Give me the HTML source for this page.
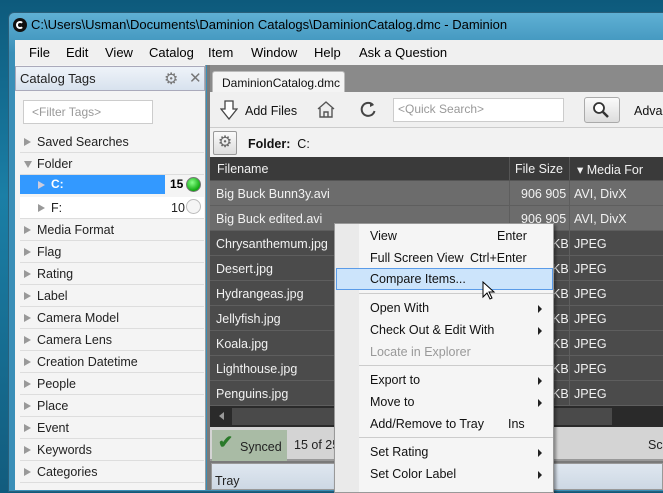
<!DOCTYPE html>
<html><head><style>
*{margin:0;padding:0;box-sizing:border-box}
body{width:663px;height:490px;overflow:hidden;font-family:"Liberation Sans",sans-serif;font-size:12px;position:relative;background:linear-gradient(180deg,#0d5a7c 0%,#1b7fa6 40%,#125c7e 100%)}
.a{position:absolute}
.win{left:8px;top:12px;width:660px;height:480px;background:linear-gradient(180deg,#5fb0d4,#3a8fb8 40px);border-radius:6px 0 0 0;border:1px solid #2a5f7a}
.menu{left:15px;top:40px;width:648px;height:25px;background:#f0f0f0;font-size:13px}
.menu span{position:absolute;top:5px}
.lp{left:15px;top:65px;width:191px;height:425px;background:#f4f4f4;border-right:1px solid #999}
.row{position:absolute;left:20px;width:184px;height:22px;border-bottom:1px solid #ddd;font-size:12.5px;color:#222}
.row .t{position:absolute;left:17px;top:4px}
.row .tri{position:absolute;left:4px;top:7px;width:0;height:0;border-left:7px solid #999;border-top:4px solid transparent;border-bottom:4px solid transparent}
.tr{position:absolute;left:210px;width:453px;height:25px;border-bottom:1px solid #5e5e5e;color:#f2f2f2;font-size:12.5px;background:#4b4b4b}
.tr span{position:absolute;top:6px;white-space:nowrap}
.tr .c1{left:6px}.tr .c2{left:311px}.tr .c3{left:364px}
.tr .kb{left:342px}
.cm{left:334px;top:223px;width:220px;height:270px;background:#f5f5f5;border:1px solid #999;box-shadow:2px 2px 3px rgba(0,0,0,.4)}
.mi{position:absolute;left:35px;font-size:12.5px;color:#111}
.sc{position:absolute;font-size:12.5px;color:#111}
.ar{position:absolute;left:203px;width:0;height:0;border-left:4px solid #222;border-top:4px solid transparent;border-bottom:4px solid transparent}
.sep{position:absolute;left:24px;width:194px;height:1px;background:#ccc}
</style></head><body>
<div class="a win"></div>
<div class="a" style="left:13px;top:18px;width:14px;height:14px;border-radius:50%;background:#111;"><div class="a" style="left:3px;top:3px;width:8px;height:8px;border-radius:50%;border:2px solid #fff;border-right-color:#111"></div></div>
<div class="a" style="left:31px;top:17px;font-size:13px;color:#000">C:\Users\Usman\Documents\Daminion Catalogs\DaminionCatalog.dmc - Daminion</div>
<div class="a menu"><span style="left:14px">File</span><span style="left:51px">Edit</span><span style="left:90px">View</span><span style="left:134px">Catalog</span><span style="left:193px">Item</span><span style="left:236px">Window</span><span style="left:299px">Help</span><span style="left:344px">Ask a Question</span></div>
<div class="a lp"></div>
<div class="a" style="left:15px;top:66px;width:190px;height:25px;background:linear-gradient(#eef3f9,#d8e2ee);border:1px solid #aab;"></div>
<div class="a" style="left:20px;top:71px;font-size:13px;color:#222">Catalog Tags</div>
<div class="a" style="left:164px;top:69px;font-size:16px;color:#777">⚙</div>
<div class="a" style="left:189px;top:69px;font-size:15px;color:#777">✕</div>
<div class="a" style="left:23px;top:100px;width:130px;height:24px;background:#fff;border:1px solid #ccc;color:#999;padding:4px 8px;font-size:12px">&lt;Filter Tags&gt;</div>
<div class="row" style="top:131px"><i class="tri"></i><span class="t">Saved Searches</span></div>
<div class="row" style="top:153px"><i class="tri" style="border:none;border-top:7px solid #999;border-left:4px solid transparent;border-right:4px solid transparent;top:8px"></i><span class="t">Folder</span></div>
<div class="a" style="left:20px;top:175px;width:145px;height:19px;background:#3399ff"></div>
<div class="a" style="left:38px;top:181px;border-left:7px solid #ccd;border-top:4px solid transparent;border-bottom:4px solid transparent"></div>
<div class="a" style="left:51px;top:177px;color:#fff;font-weight:bold">C:</div>
<div class="a" style="left:170px;top:177px;font-weight:bold">15</div>
<div class="a" style="left:186px;top:177px;width:15px;height:15px;border-radius:50%;background:radial-gradient(circle at 40% 35%,#8f8,#1a1 70%);border:1px solid #777"></div>
<div class="row" style="top:197px;background:#fff"><i class="tri" style="left:18px"></i><span class="t" style="left:31px">F:</span><span class="a" style="left:151px;top:4px">10</span><span class="a" style="left:166px;top:2px;width:15px;height:15px;border-radius:50%;border:1px solid #bbb;background:#f5f5f5"></span></div>
<div class="row" style="top:219px"><i class="tri"></i><span class="t">Media Format</span></div>
<div class="row" style="top:241px"><i class="tri"></i><span class="t">Flag</span></div>
<div class="row" style="top:263px"><i class="tri"></i><span class="t">Rating</span></div>
<div class="row" style="top:285px"><i class="tri"></i><span class="t">Label</span></div>
<div class="row" style="top:307px"><i class="tri"></i><span class="t">Camera Model</span></div>
<div class="row" style="top:329px"><i class="tri"></i><span class="t">Camera Lens</span></div>
<div class="row" style="top:351px"><i class="tri"></i><span class="t">Creation Datetime</span></div>
<div class="row" style="top:373px"><i class="tri"></i><span class="t">People</span></div>
<div class="row" style="top:395px"><i class="tri"></i><span class="t">Place</span></div>
<div class="row" style="top:417px"><i class="tri"></i><span class="t">Event</span></div>
<div class="row" style="top:439px"><i class="tri"></i><span class="t">Keywords</span></div>
<div class="row" style="top:461px"><i class="tri"></i><span class="t">Categories</span></div>

<div class="a" style="left:207px;top:65px;width:456px;height:425px;background:#7a7a7a"></div>
<div class="a" style="left:210px;top:65px;width:453px;height:27px;background:#8a8a8a"></div>
<div class="a" style="left:212px;top:71px;width:133px;height:22px;background:#f4f4f4;border:1px solid #bbb;border-bottom:none;border-radius:3px 3px 0 0;padding:4px 0 0 9px;font-size:12px;color:#111;white-space:nowrap">DaminionCatalog.dmc</div>
<div class="a" style="left:210px;top:92px;width:453px;height:35px;background:#f0f0f0"></div>
<svg class="a" style="left:220px;top:100px" width="18" height="20" viewBox="0 0 18 20"><path d="M5 1h8v8h4l-8 10-8-10h4z" fill="#fff" stroke="#444" stroke-width="1.3"/></svg>
<div class="a" style="left:245px;top:104px;font-size:12.5px;color:#111">Add Files</div>
<svg class="a" style="left:316px;top:100px" width="20" height="18" viewBox="0 0 20 18"><path d="M2 9L10 2l8 7M4 8v9h12V8M8 17v-5h4v5" fill="#eee" stroke="#555" stroke-width="1.4"/></svg>
<svg class="a" style="left:359px;top:100px" width="18" height="18" viewBox="0 0 18 18"><path d="M14 5A6.5 6.5 0 1 0 15.5 11" fill="none" stroke="#444" stroke-width="2"/><path d="M11 2l4 3-4 2z" fill="#444"/></svg>
<div class="a" style="left:393px;top:98px;width:171px;height:24px;background:#fff;border:1px solid #ccc;color:#999;padding:3px 4px;font-size:12px">&lt;Quick Search&gt;</div>
<div class="a" style="left:584px;top:97px;width:36px;height:26px;border:1px solid #aaa;border-radius:3px;background:linear-gradient(#fafafa,#ddd)"></div>
<svg class="a" style="left:592px;top:101px" width="18" height="18" viewBox="0 0 18 18"><circle cx="7" cy="7" r="5" fill="#fff" stroke="#333" stroke-width="1.8"/><path d="M11 11l5 5" stroke="#333" stroke-width="2.5"/></svg>
<div class="a" style="left:634px;top:104px;font-size:12.5px;color:#111">Adva</div>
<div class="a" style="left:210px;top:127px;width:453px;height:30px;background:#f2f2f2;border-top:1px solid #ccc"></div>
<div class="a" style="left:213px;top:131px;width:24px;height:24px;border:1px solid #999;border-radius:2px;background:linear-gradient(#fafafa,#ddd);font-size:16px;color:#666;text-align:center;line-height:22px">⚙</div>
<div class="a" style="left:248px;top:137px;font-size:12.5px;color:#111"><b>Folder:</b>&nbsp; C:</div>
<div class="a" style="left:210px;top:157px;width:453px;height:25px;background:#3a3a3a;border-bottom:2px solid #555"></div>
<div class="a" style="left:217px;top:162px;color:#f2f2f2;font-size:12.5px">Filename</div>
<div class="a" style="left:509px;top:157px;width:1px;height:24px;background:#555"></div>
<div class="a" style="left:515px;top:162px;color:#f2f2f2;font-size:12.5px">File Size</div>
<div class="a" style="left:569px;top:157px;width:1px;height:24px;background:#555"></div>
<div class="a" style="left:577px;top:162px;color:#f2f2f2;font-size:12.5px">▾ Media For</div>
<div class="tr" style="top:181px;background:#6c6c6c"><span class="c1">Big Buck Bunn3y.avi</span><span class="c2">906 905</span><span class="c3">AVI, DivX</span></div>
<div class="tr" style="top:206px;background:#6c6c6c"><span class="c1">Big Buck edited.avi</span><span class="c2">906 905</span><span class="c3">AVI, DivX</span></div>
<div class="tr" style="top:231px"><span class="c1">Chrysanthemum.jpg</span><span class="kb">KB</span><span class="c3">JPEG</span></div>
<div class="tr" style="top:256px"><span class="c1">Desert.jpg</span><span class="kb">KB</span><span class="c3">JPEG</span></div>
<div class="tr" style="top:281px"><span class="c1">Hydrangeas.jpg</span><span class="kb">KB</span><span class="c3">JPEG</span></div>
<div class="tr" style="top:306px"><span class="c1">Jellyfish.jpg</span><span class="kb">KB</span><span class="c3">JPEG</span></div>
<div class="tr" style="top:331px"><span class="c1">Koala.jpg</span><span class="kb">KB</span><span class="c3">JPEG</span></div>
<div class="tr" style="top:356px"><span class="c1">Lighthouse.jpg</span><span class="kb">KB</span><span class="c3">JPEG</span></div>
<div class="tr" style="top:381px"><span class="c1">Penguins.jpg</span><span class="kb">KB</span><span class="c3">JPEG</span></div>
<div class="a" style="left:509px;top:181px;width:1px;height:225px;background:#5e5e5e"></div>
<div class="a" style="left:569px;top:181px;width:1px;height:225px;background:#5e5e5e"></div>
<div class="a" style="left:210px;top:406px;width:453px;height:21px;background:#2a2a2a"></div>
<div class="a" style="left:232px;top:408px;width:380px;height:17px;background:#4a4a4a"></div>
<div class="a" style="left:219px;top:412px;border-right:5px solid #999;border-top:4px solid transparent;border-bottom:4px solid transparent"></div>
<div class="a" style="left:210px;top:427px;width:453px;height:34px;background:#d4d4d4;border-bottom:2px solid #999"></div>
<div class="a" style="left:212px;top:430px;width:75px;height:31px;background:#a9bba5"></div>
<div class="a" style="left:218px;top:432px;color:#2a7a2a;font-size:18px;font-weight:bold">✔</div>
<div class="a" style="left:240px;top:440px;font-size:12.5px;color:#222">Synced</div>
<div class="a" style="left:294px;top:438px;font-size:12.5px;color:#222">15 of 25</div>
<div class="a" style="left:648px;top:438px;font-size:12.5px;color:#222">Sc</div>
<div class="a" style="left:211px;top:463px;width:452px;height:27px;background:linear-gradient(#dfe7f0,#cdd8e4);border:1px solid #999"></div>
<div class="a" style="left:215px;top:474px;font-size:12.5px;color:#222">Tray</div>

<div class="a cm">
<div class="a" style="left:0;top:0;width:24px;height:268px;background:#eaeaea"></div>
<div class="mi" style="top:5px">View</div><div class="sc" style="left:162px;top:5px">Enter</div>
<div class="mi" style="top:27px">Full Screen View</div><div class="sc" style="left:135px;top:27px">Ctrl+Enter</div>
<div class="a" style="left:1px;top:44px;width:217px;height:22px;background:#cce4fb;border:1px solid #5a9be8"></div>
<div class="mi" style="top:48px">Compare Items...</div>
<div class="sep" style="top:69px"></div>
<div class="mi" style="top:77px">Open With</div><i class="ar" style="top:81px"></i>
<div class="mi" style="top:99px">Check Out &amp; Edit With</div><i class="ar" style="top:103px"></i>
<div class="mi" style="top:121px;color:#999">Locate in Explorer</div>
<div class="sep" style="top:141px"></div>
<div class="mi" style="top:149px">Export to</div><i class="ar" style="top:153px"></i>
<div class="mi" style="top:171px">Move to</div><i class="ar" style="top:175px"></i>
<div class="mi" style="top:193px">Add/Remove to Tray</div><div class="sc" style="left:173px;top:193px">Ins</div>
<div class="sep" style="top:213px"></div>
<div class="mi" style="top:221px">Set Rating</div><i class="ar" style="top:225px"></i>
<div class="mi" style="top:243px">Set Color Label</div><i class="ar" style="top:247px"></i>
</div>
<svg class="a" style="left:482px;top:281px" width="14" height="20" viewBox="0 0 14 20"><path d="M1 1v15l4-4 3 6 2-1-3-6h5z" fill="#fff" stroke="#000" stroke-width="1"/></svg>
</body></html>
